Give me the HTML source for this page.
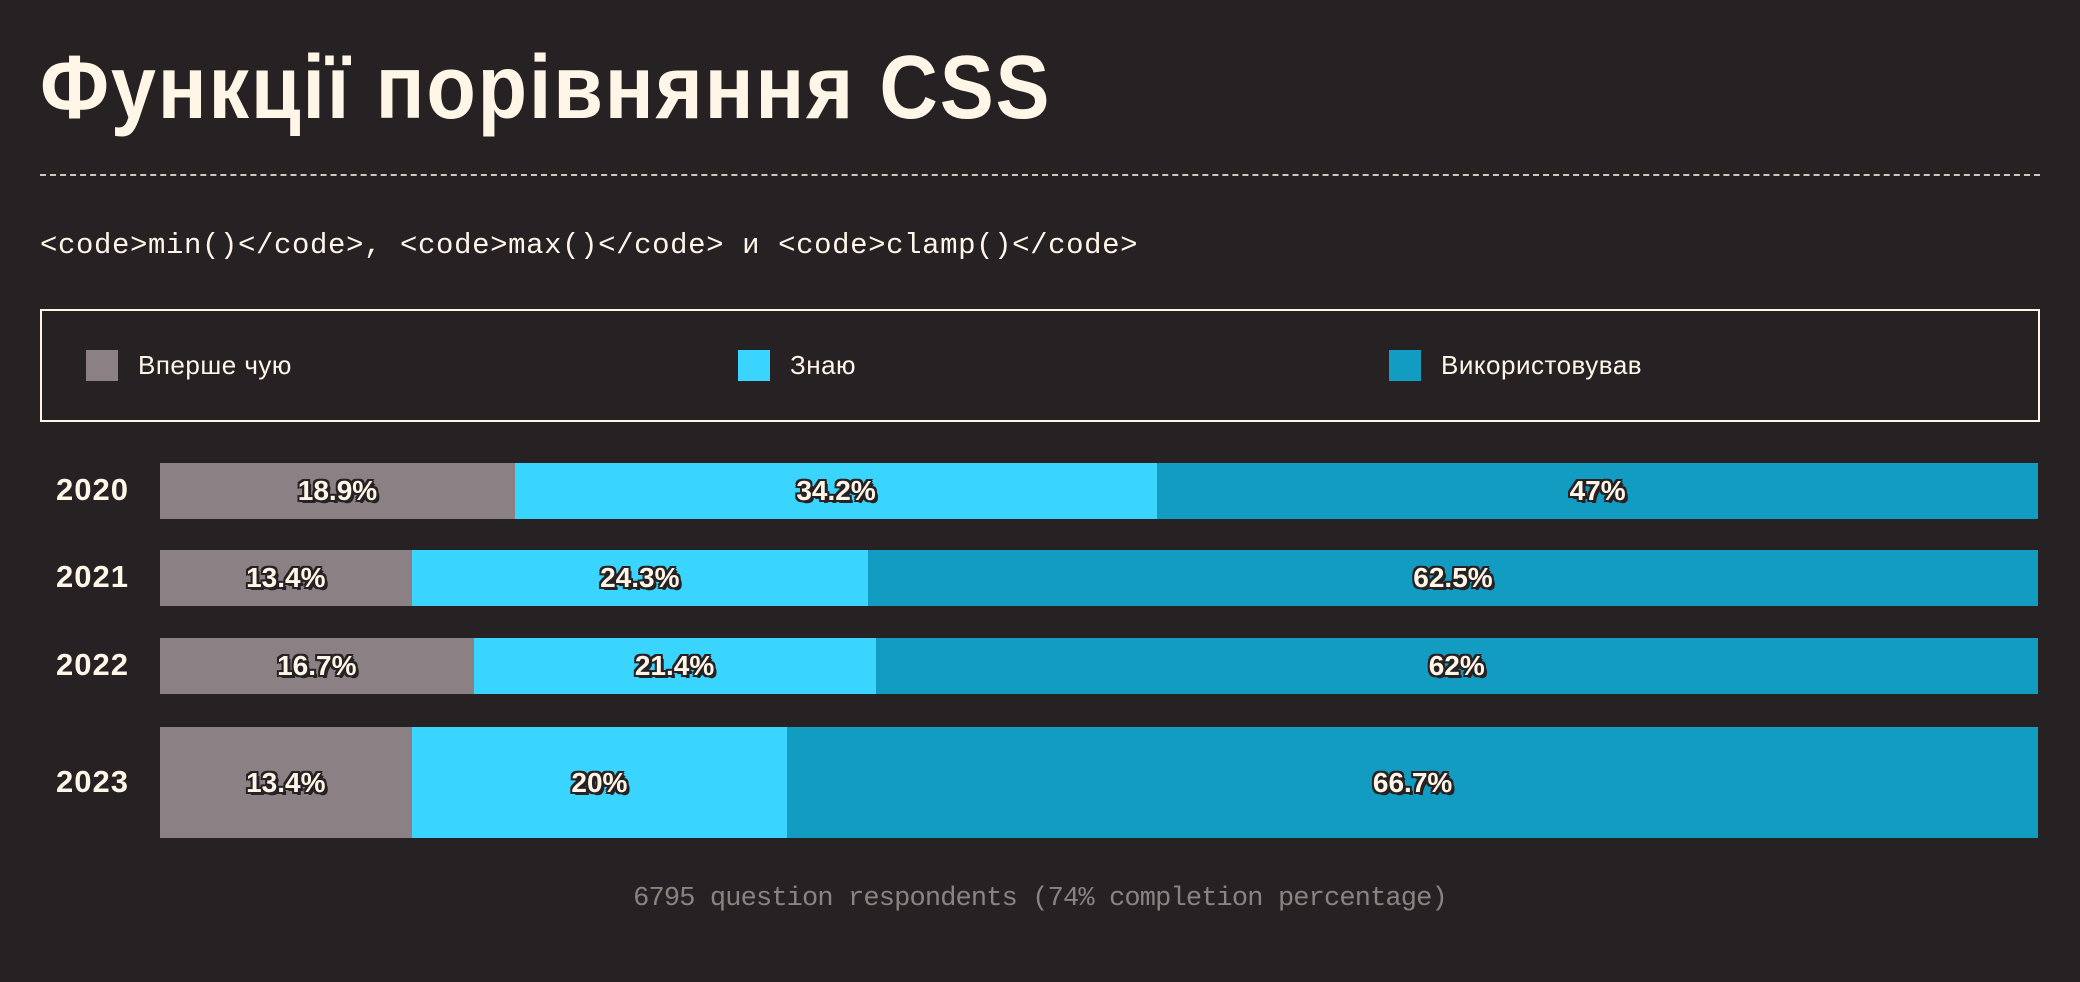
<!DOCTYPE html>
<html><head><meta charset="utf-8"><style>
*{margin:0;padding:0;box-sizing:border-box}
html,body{width:2080px;height:982px;background:#262224;overflow:hidden}
body{position:relative;color:#fff6e8;font-family:"Liberation Mono",monospace}
.title{position:absolute;left:40px;top:38px;font-family:"Liberation Sans",sans-serif;font-weight:bold;font-size:90px;line-height:100px;letter-spacing:2px;color:#fff6e8;white-space:nowrap;transform:scaleX(0.9);transform-origin:left top}
.dash{position:absolute;left:40px;top:174px;width:2000px;border-top:2px dashed #cfc7bd}
.sub{position:absolute;left:40px;top:228px;font-size:29px;line-height:36px;white-space:pre;letter-spacing:0.6px}
.legend{position:absolute;left:40px;top:309px;width:2000px;height:113px;border:2px solid #fff6e8}
.li{position:absolute;top:39px;display:flex;align-items:center;font-family:"Liberation Sans",sans-serif;font-size:26px;letter-spacing:0.5px}
.sw{width:32px;height:31px;margin-right:20px}
.row{position:absolute;left:160px;width:1878px;display:flex}
.row div{height:100%;display:flex;align-items:center;justify-content:center;font-family:"Liberation Sans",sans-serif;font-weight:bold;font-size:28px;color:#fff6e8;
text-shadow:2px 0 #262224,-2px 0 #262224,0 2px #262224,0 -2px #262224,2px 2px #262224,-2px -2px #262224,2px -2px #262224,-2px 2px #262224,3px 3px #262224}
.a{background:#8b8084}.b{background:#39d5ff}.c{background:#139cc2}
.yr{position:absolute;left:56px;font-family:"Liberation Sans",sans-serif;font-weight:bold;font-size:31px;letter-spacing:1px}
.foot{position:absolute;left:0;width:2080px;text-align:center;top:884px;font-size:27px;color:#8a8380;letter-spacing:-0.85px}
</style></head><body>
<div class="title">Функції порівняння CSS</div>
<div class="dash"></div>
<div class="sub">&lt;code&gt;min()&lt;/code&gt;, &lt;code&gt;max()&lt;/code&gt; и &lt;code&gt;clamp()&lt;/code&gt;</div>
<div class="legend">
<div class="li" style="left:44px"><span class="sw a"></span>Вперше чую</div>
<div class="li" style="left:696px"><span class="sw b"></span>Знаю</div>
<div class="li" style="left:1347px"><span class="sw c"></span>Використовував</div>
</div>
<div class="yr" style="top:472px">2020</div>
<div class="row" style="top:463px;height:56px"><div class="a" style="width:18.9%">18.9%</div><div class="b" style="width:34.2%">34.2%</div><div class="c" style="flex:1">47%</div></div>
<div class="yr" style="top:559px">2021</div>
<div class="row" style="top:550px;height:56px"><div class="a" style="width:13.4%">13.4%</div><div class="b" style="width:24.3%">24.3%</div><div class="c" style="flex:1">62.5%</div></div>
<div class="yr" style="top:647px">2022</div>
<div class="row" style="top:638px;height:56px"><div class="a" style="width:16.7%">16.7%</div><div class="b" style="width:21.4%">21.4%</div><div class="c" style="flex:1">62%</div></div>
<div class="yr" style="top:764px">2023</div>
<div class="row" style="top:727px;height:111px"><div class="a" style="width:13.4%">13.4%</div><div class="b" style="width:20%">20%</div><div class="c" style="flex:1">66.7%</div></div>
<div class="foot">6795 question respondents (74% completion percentage)</div>
</body></html>
